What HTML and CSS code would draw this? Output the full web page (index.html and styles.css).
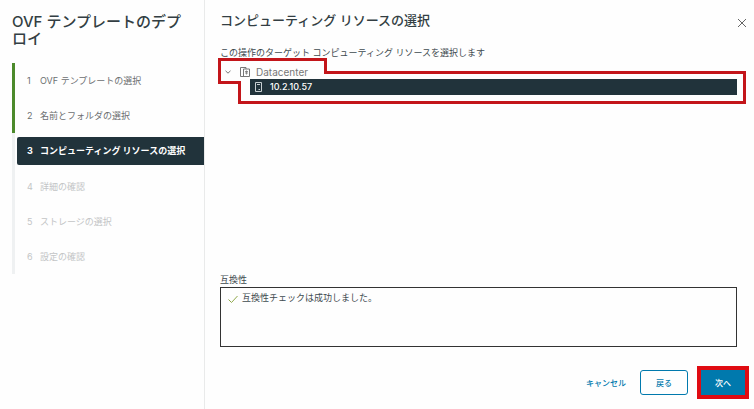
FILE: index.html
```html
<!DOCTYPE html>
<html lang="ja">
<head>
    <meta charset="UTF-8">
    <meta name="viewport" content="width=device-width, initial-scale=1.0">
    <title>OVF テンプレートのデプロイ</title>
    <link rel="stylesheet" href="styles.css">
</head>
<body>
    <div class="wizard">
        <!-- ステップ一覧 -->
        <aside class="sidebar">
            <h1 class="wizard-title">OVF テンプレートのデプロイ</h1>
            <ol class="steps">
                <li class="step done"><span class="num">1</span>OVF テンプレートの選択</li>
                <li class="step done"><span class="num">2</span>名前とフォルダの選択</li>
                <li class="step active" aria-current="step"><span class="num">3</span>コンピューティング リソースの選択</li>
                <li class="step"><span class="num">4</span>詳細の確認</li>
                <li class="step"><span class="num">5</span>ストレージの選択</li>
                <li class="step"><span class="num">6</span>設定の確認</li>
            </ol>
        </aside>

        <main class="content">
            <header class="content-header">
                <h2>コンピューティング リソースの選択</h2>
                <button class="close-btn" type="button" aria-label="閉じる">
                    <svg width="10" height="10" viewBox="0 0 10 10"><path d="M1 1l8 8M9 1l-8 8"/></svg>
                </button>
            </header>

            <p class="description">この操作のターゲット コンピューティング リソースを選択します</p>

            <!-- リソースツリー -->
            <div class="tree">
                <div class="tree-row">
                    <button class="caret" type="button" aria-label="折りたたむ">
                        <svg width="6" height="6" viewBox="0 0 6 6"><path d="M.5 1.8L3 4.2l2.500-2.400"/></svg>
                    </button>
                    <svg class="dc-icon" width="10" height="10" viewBox="0 0 10 10">
                        <path d="M6 2V.5H.5v9h9V2H3.500v7.500"/>
                        <path d="M5 4.500h3M5 6h3M6.500 3.500v4" stroke-width=".8"/>
                    </svg>
                    <span class="dc-name">Datacenter</span>
                </div>
                <div class="tree-row host">
                    <svg class="host-icon" width="7" height="10" viewBox="0 0 7 10">
                        <path d="M.5.5h6v9h-6zM2 2.500h3"/>
                        <path d="M3.500 7.500h1.500"/>
                    </svg>
                    <span>10.2.10.57</span>
                </div>
            </div>

            <!-- 互換性チェック -->
            <section class="compat">
                <h3>互換性</h3>
                <div class="compat-box">
                    <svg class="check" width="10" height="10" viewBox="0 0 10 10"><path d="M.5 5.500l3 3L9.500 2"/></svg>
                    <span>互換性チェックは成功しました。</span>
                </div>
            </section>

            <footer class="actions">
                <button class="btn btn-link" type="button">キャンセル</button>
                <button class="btn btn-outline" type="button">戻る</button>
                <div class="highlight">
                    <button class="btn btn-primary" type="button">次へ</button>
                </div>
            </footer>
        </main>
    </div>
</body>
</html>
```
FILE: styles.css
```css
:root {
    --dark: #21333b;
    --text: #3f4b50;
    --muted: #6c6f71;
    --disabled: #c3c5c6;
    --blue: #0079ad;
    --green: #4c8a2b;
    --red: #c3151a;
}

* {
    margin: 0;
    padding: 0;
    box-sizing: border-box;
}

body {
    background: #fefefe;
    color: var(--text);
    font-family: Inter, "Noto Sans CJK JP", sans-serif;
    font-size: 9px;
    line-height: 14px;
}

button {
    border: 0;
    background: none;
    font-family: inherit;
    cursor: pointer;
}

svg {
    display: block;
    flex: none;
    fill: none;
    stroke: currentColor;
}

.wizard {
    display: flex;
    min-height: 100vh;
}

/* サイドバー */
.sidebar {
    width: 205px;
    flex: none;
    padding: 13px 0 0 12px;
    border-right: 1px solid #e9eaea;
}

.wizard-title {
    padding-right: 16px;
    margin-bottom: 16px;
    color: #333e43;
    font-size: 15px;
    font-weight: 500;
    line-height: 17px;
}

.steps {
    list-style: none;
}

.step {
    display: flex;
    align-items: center;
    height: 35px;
    padding-left: 12px;
    border-left: 3px solid #eff1f2;
    color: var(--disabled);
}

.step .num {
    width: 13px;
}

.step.done {
    border-left-color: var(--green);
    color: var(--muted);
}

.step.active {
    position: relative;
    z-index: 0;
    height: 36px;
    color: #fff;
    font-weight: 700;
}

.step.active::before {
    content: "";
    position: absolute;
    z-index: -1;
    inset: 4px 0 4px 2px;
    border-radius: 2px 0 0 2px;
    background: var(--dark);
}

/* メイン */
.content {
    flex: 1;
    display: flex;
    flex-direction: column;
    min-width: 0;
    padding: 10px 5px 10px 15px;
}

.content-header {
    display: flex;
    justify-content: space-between;
    align-items: flex-start;
}

.content-header h2 {
    color: #333e43;
    font-size: 13px;
    font-weight: 500;
    line-height: 20px;
}

.close-btn {
    padding: 8px 2px;
    color: #666;
}

.description {
    margin-top: 10px;
}

/* ツリー */
.tree {
    position: relative;
    z-index: 0;
    margin: 4px 12px 0 0;
    padding-bottom: 9px;
}

/* 選択対象を囲む赤枠 */
.tree::before {
    content: "";
    position: absolute;
    z-index: -1;
    inset: -6px -9px 0 -2px;
    background:
        linear-gradient(#fefefe, #fefefe) 3px 3px / 103px 20px,
        linear-gradient(#fefefe, #fefefe) 23px 16px / calc(100% - 26px) calc(100% - 19px),
        linear-gradient(var(--red), var(--red)) 0 0 / 109px 26px,
        linear-gradient(var(--red), var(--red)) 20px 13px / calc(100% - 20px) calc(100% - 13px);
    background-repeat: no-repeat;
}

.tree-row {
    display: flex;
    align-items: center;
    height: 15px;
    padding-left: 5px;
    color: #777;
}

.caret {
    margin-right: 9px;
    color: #777;
}

.dc-icon {
    margin-right: 6px;
}

.dc-name {
    font-size: 10px;
}

.tree-row.host {
    height: 16px;
    margin-left: 30px;
    background: var(--dark);
    color: #fff;
    font-weight: 500;
}

.host-icon {
    margin-right: 8px;
    color: #c9d0d3;
}

/* 互換性 */
.compat {
    margin: auto 12px 19px 0;
}

.compat h3 {
    font-size: 9px;
    font-weight: 400;
}

.compat-box {
    display: flex;
    align-items: flex-start;
    height: 60px;
    padding: 3px 7px;
    border: 1px solid #333;
}

.check {
    margin: 3px 4px 0 0;
    color: #8fa84a;
}

/* ボタン */
.actions {
    display: flex;
    justify-content: flex-end;
    align-items: center;
}

.btn {
    height: 25px;
    color: var(--blue);
    font-size: 8px;
    font-weight: 500;
}

.btn-outline {
    width: 48px;
    margin: 0 9px 0 14px;
    border: 1px solid var(--blue);
    border-radius: 3px;
}

.btn-primary {
    display: block;
    width: 44px;
    background: var(--blue);
    color: #fff;
}

.highlight {
    border: 4px solid #e00b12;
}
```
